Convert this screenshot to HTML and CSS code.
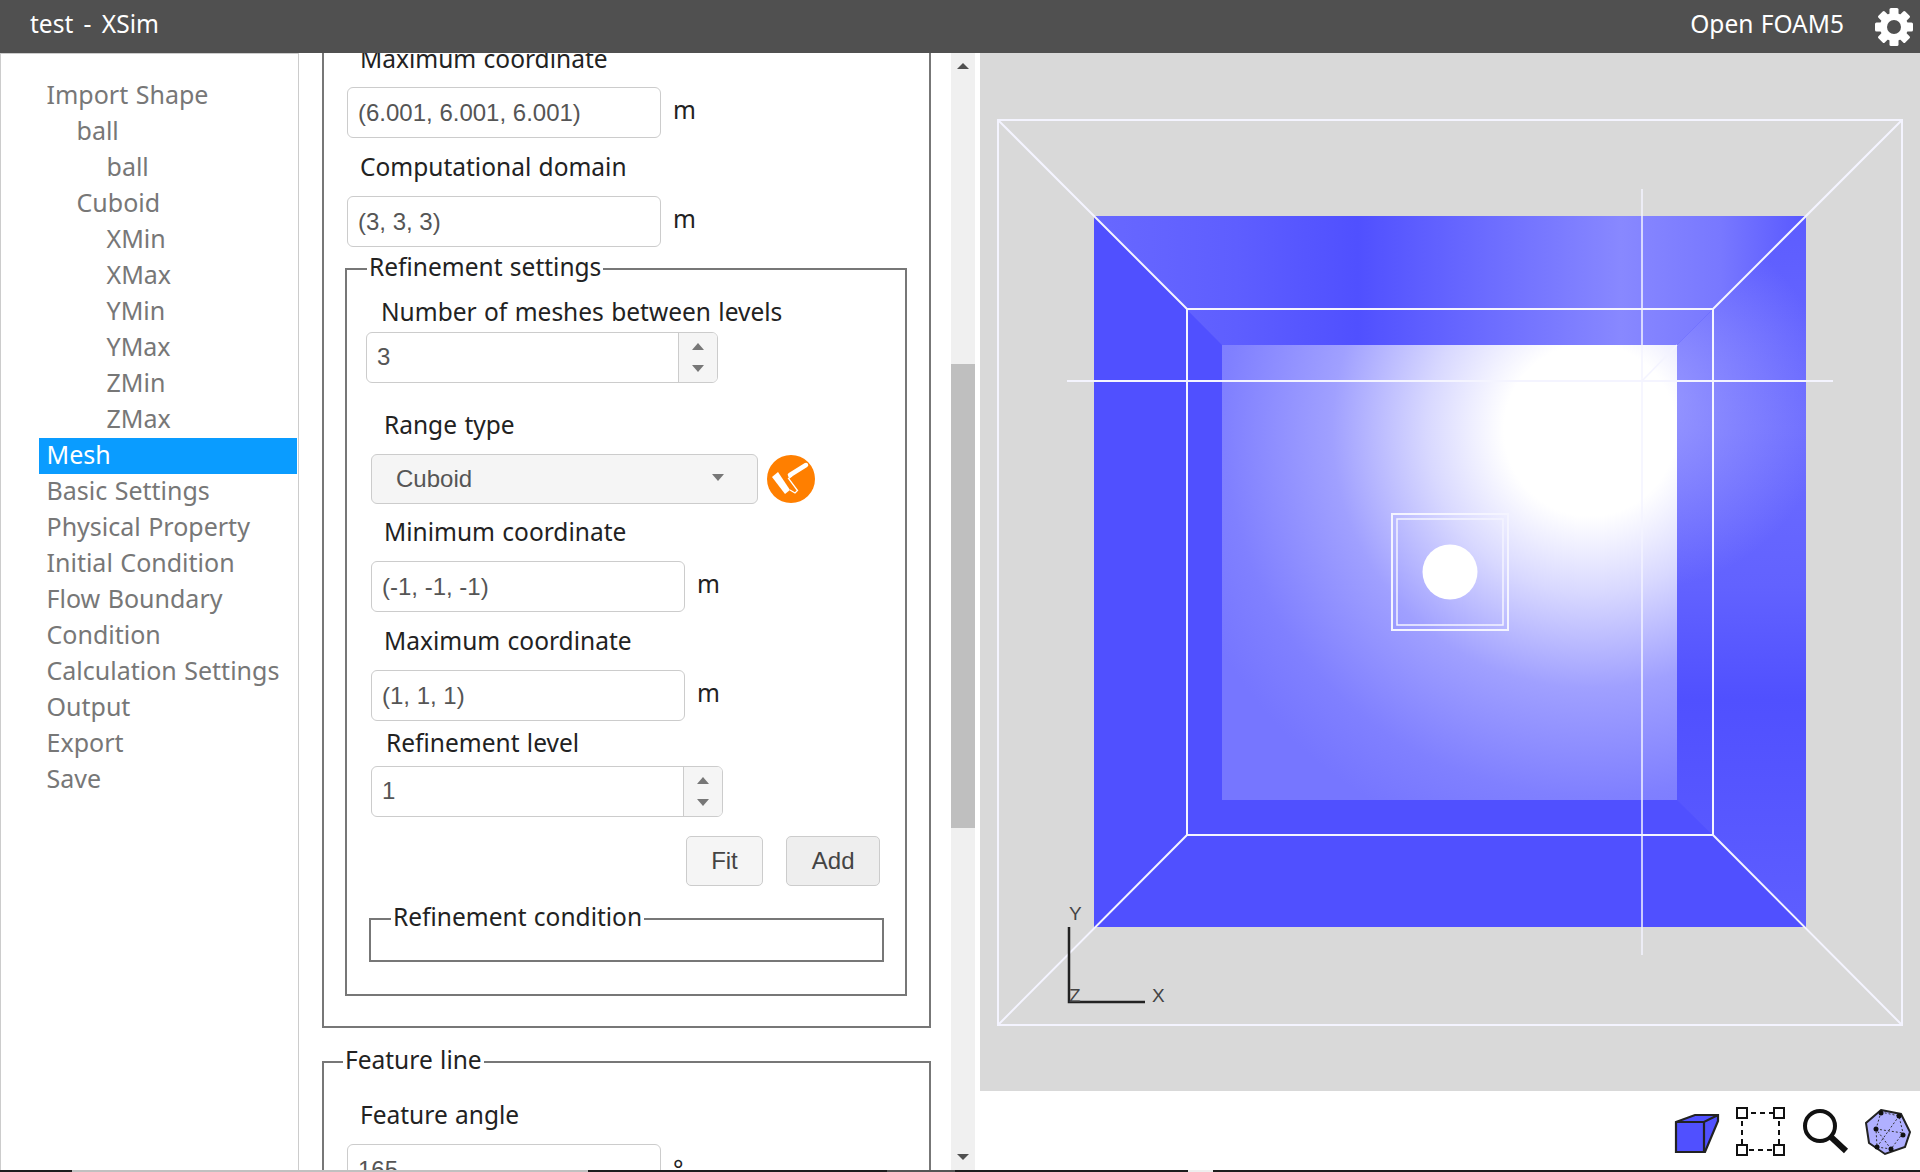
FILE: index.html
```html
<!DOCTYPE html>
<html lang="en">
<head>
  <meta charset="UTF-8">
  <title>test - XSim</title>
  <link rel="stylesheet" href="styles.css">
</head>
<body>

  <!-- Header -->
  <header class="top-bar">
    <div class="app-title">test - XSim</div>
    <div class="solver-name">Open FOAM5</div>
    <svg class="gear-icon" viewBox="0 0 40 40" width="40" height="40">
      <g fill="#fff">
        <rect x="15.5" y="1" width="9" height="38" rx="1.5"/>
        <rect x="15.5" y="1" width="9" height="38" rx="1.5" transform="rotate(45 20 20)"/>
        <rect x="15.5" y="1" width="9" height="38" rx="1.5" transform="rotate(90 20 20)"/>
        <rect x="15.5" y="1" width="9" height="38" rx="1.5" transform="rotate(135 20 20)"/>
      </g>
      <circle cx="20" cy="20" r="10.5" fill="none" stroke="#fff" stroke-width="7"/>
      <circle cx="20" cy="20" r="7" fill="#505050"/>
    </svg>
  </header>

  <div class="main-area">

    <!-- Tree menu -->
    <nav class="side-menu">
      <div class="menu-item">Import Shape</div>
      <div class="menu-item level-1">ball</div>
      <div class="menu-item level-2">ball</div>
      <div class="menu-item level-1">Cuboid</div>
      <div class="menu-item level-2">XMin</div>
      <div class="menu-item level-2">XMax</div>
      <div class="menu-item level-2">YMin</div>
      <div class="menu-item level-2">YMax</div>
      <div class="menu-item level-2">ZMin</div>
      <div class="menu-item level-2">ZMax</div>
      <div class="menu-item active">Mesh</div>
      <div class="menu-item">Basic Settings</div>
      <div class="menu-item">Physical Property</div>
      <div class="menu-item">Initial Condition</div>
      <div class="menu-item">Flow Boundary</div>
      <div class="menu-item">Condition</div>
      <div class="menu-item">Calculation Settings</div>
      <div class="menu-item">Output</div>
      <div class="menu-item">Export</div>
      <div class="menu-item">Save</div>
    </nav>

    <!-- Settings form, scrolled part way down -->
    <section class="form-panel">
      <div class="form-content">
        <div class="group">
          <div class="field-label">Maximum coordinate</div>
          <div class="input-row">
            <div class="text-input">(6.001, 6.001, 6.001)</div>
            <span class="unit">m</span>
          </div>
          <div class="field-label">Computational domain</div>
          <div class="input-row">
            <div class="text-input">(3, 3, 3)</div>
            <span class="unit">m</span>
          </div>

          <fieldset class="refine-box">
            <legend>Refinement settings</legend>
            <div class="field-label meshes-label">Number of meshes between levels</div>
            <div class="spin-input first-spin">
              <span class="spin-value">3</span>
              <span class="spin-buttons"><i class="arrow-up"></i><i class="arrow-down"></i></span>
            </div>

            <div class="range-block">
              <div class="field-label range-label">Range type</div>
              <div class="select-row">
                <div class="select-input">
                  <span>Cuboid</span>
                  <i class="arrow-down"></i>
                </div>
                <svg class="brush-icon" viewBox="0 0 48 48" width="48" height="48">
                  <circle cx="24" cy="24" r="24" fill="#ff7f00"/>
                  <path d="M5 22L11 17L23 35L18 39Z" fill="#fff"/>
                  <path d="M23 35L28 38L30.5 35.5L21.5 23.5L25 21" fill="none" stroke="#fff" stroke-width="1.3"/>
                  <path d="M23 20L39 10" fill="none" stroke="#fff" stroke-width="4.5" stroke-linecap="round"/>
                </svg>
              </div>
              <div class="field-label min-label">Minimum coordinate</div>
              <div class="input-row">
                <div class="text-input">(-1, -1, -1)</div>
                <span class="unit">m</span>
              </div>
              <div class="field-label">Maximum coordinate</div>
              <div class="input-row">
                <div class="text-input">(1, 1, 1)</div>
                <span class="unit">m</span>
              </div>
              <div class="field-label level-label">Refinement level</div>
              <div class="spin-input">
                <span class="spin-value">1</span>
                <span class="spin-buttons"><i class="arrow-up"></i><i class="arrow-down"></i></span>
              </div>
            </div>

            <div class="button-row">
              <div class="btn">Fit</div>
              <div class="btn btn-add">Add</div>
            </div>

            <fieldset class="condition-box">
              <legend>Refinement condition</legend>
            </fieldset>
          </fieldset>
        </div>

        <fieldset class="feature-box">
          <legend>Feature line</legend>
          <div class="field-label feature-label">Feature angle</div>
          <div class="input-row">
            <div class="text-input">165</div>
            <span class="unit degree">°</span>
          </div>
        </fieldset>
      </div>

      <div class="scrollbar">
        <i class="scroll-up"></i>
        <div class="scroll-track"><div class="scroll-thumb"></div></div>
        <i class="scroll-down"></i>
      </div>
    </section>

    <!-- 3D view and toolbar -->
    <section class="view-panel">
      <svg class="view-3d" viewBox="980 53 940 1038" width="940" height="1038">
        <defs>
          <linearGradient id="topFace" gradientUnits="userSpaceOnUse" x1="1094" y1="0" x2="1806" y2="0">
            <stop offset="0" stop-color="#6868ff"/>
            <stop offset="0.2" stop-color="#5e5eff"/>
            <stop offset="0.37" stop-color="#5050ff"/>
            <stop offset="0.58" stop-color="#7070ff"/>
            <stop offset="0.74" stop-color="#8888ff"/>
            <stop offset="0.88" stop-color="#7878ff"/>
            <stop offset="1" stop-color="#5858ff"/>
          </linearGradient>
          <linearGradient id="rightFace" gradientUnits="userSpaceOnUse" x1="0" y1="216" x2="0" y2="927">
            <stop offset="0" stop-color="#5c5cff"/>
            <stop offset="0.3" stop-color="#6c6cff"/>
            <stop offset="0.52" stop-color="#6262ff"/>
            <stop offset="0.68" stop-color="#5050ff"/>
            <stop offset="1" stop-color="#5e5eff"/>
          </linearGradient>
          <radialGradient id="rightGlow" gradientUnits="userSpaceOnUse" cx="1640" cy="400" r="190">
            <stop offset="0" stop-color="#a8a8ff" stop-opacity="0.8"/>
            <stop offset="1" stop-color="#a8a8ff" stop-opacity="0"/>
          </radialGradient>
          <radialGradient id="backGlow" gradientUnits="userSpaceOnUse" cx="1590" cy="430" r="430">
            <stop offset="0" stop-color="#fff"/>
            <stop offset="0.2" stop-color="#fff"/>
            <stop offset="0.38" stop-color="#d8d8ff"/>
            <stop offset="0.6" stop-color="#a0a0ff"/>
            <stop offset="0.85" stop-color="#8080ff"/>
            <stop offset="1" stop-color="#7676ff"/>
          </radialGradient>
        </defs>

        <rect x="1094" y="216" width="712" height="711" fill="#5050ff"/>
        <polygon points="1094,216 1806,216 1677,345 1222,345" fill="url(#topFace)"/>
        <polygon points="1806,216 1806,927 1677,800 1677,345" fill="url(#rightFace)"/>
        <polygon points="1806,216 1806,927 1677,800 1677,345" fill="url(#rightGlow)"/>
        <rect x="1222" y="345" width="455" height="455" fill="url(#backGlow)"/>

        <g fill="none" stroke="#f4f4ff" stroke-width="2">
          <rect x="998" y="120" width="904" height="905"/>
          <rect x="1187" y="309" width="526" height="526"/>
          <path d="M998 120L1187 309M1902 120L1713 309M998 1025L1187 835M1902 1025L1713 835"/>
          <path d="M1067 381H1833"/>
          <path d="M1642 189V955M1677 345L1642 381" stroke-width="1.5"/>
          <rect x="1392" y="514" width="116" height="116"/>
          <rect x="1397" y="519" width="106" height="106" stroke-width="1.5"/>
        </g>
        <circle cx="1450" cy="572" r="27.5" fill="#fff"/>

        <path d="M1069 927V1002H1145" fill="none" stroke="#222" stroke-width="2.5"/>
        <text class="axis-label" x="1069" y="920">Y</text>
        <text class="axis-label" x="1069" y="1002">Z</text>
        <text class="axis-label" x="1152" y="1002">X</text>
      </svg>

      <div class="view-tools">
        <svg class="tool-icon" viewBox="0 0 46 44" width="46" height="44">
          <path d="M2 12L21 5H44V11L31 42H2Z" fill="#5050ff"/>
          <path d="M2 12H30L44 5M30 12V42M2 12L21 5H44V11L31 42H2Z" fill="none" stroke="#222" stroke-width="2.2"/>
        </svg>
        <svg class="tool-icon" viewBox="0 0 50 50" width="50" height="50">
          <path d="M6 6H43V43H6Z" fill="none" stroke="#111" stroke-width="2" stroke-dasharray="5 4"/>
          <g fill="#fff" stroke="#111" stroke-width="2">
            <rect x="1" y="1" width="10" height="10"/>
            <rect x="38" y="1" width="10" height="10"/>
            <rect x="1" y="38" width="10" height="10"/>
            <rect x="38" y="38" width="10" height="10"/>
          </g>
        </svg>
        <svg class="tool-icon" viewBox="0 0 48 48" width="48" height="48">
          <circle cx="18" cy="18" r="15" fill="none" stroke="#111" stroke-width="4"/>
          <path d="M29 29L44 43" fill="none" stroke="#111" stroke-width="6"/>
        </svg>
        <svg class="tool-icon" viewBox="0 0 48 48" width="48" height="48">
          <path d="M17 2L37 6L46 24L41 39L21 46L5 35L2 15Z" fill="#b0b0ff" stroke="#222" stroke-width="2"/>
          <path d="M17 4L12 21L13 39L27 41L39 25L35 8L17 4M12 21L39 25M13 39L35 8M27 41L12 21" fill="none" stroke="#333" stroke-width="1" stroke-dasharray="2 2"/>
          <g fill="#111">
            <circle cx="17" cy="5" r="2.5"/>
            <circle cx="35" cy="8" r="2.5"/>
            <circle cx="12" cy="21" r="2.5"/>
            <circle cx="39" cy="27" r="2.5"/>
            <circle cx="13" cy="39" r="2.5"/>
            <circle cx="27" cy="41" r="2.5"/>
          </g>
        </svg>
      </div>
    </section>
  </div>

  <!-- Edge of the window below -->
  <div class="window-edge">
    <span class="edge-dark edge-a"></span>
    <span class="edge-gray edge-b"></span>
    <span class="edge-dark edge-c"></span>
    <span class="edge-mid edge-d"></span>
    <span class="edge-dark edge-e"></span>
    <span class="edge-light edge-f"></span>
    <span class="edge-dark edge-g"></span>
  </div>

</body>
</html>
```

FILE: styles.css
```css
/* Global styles */
* {
  box-sizing: border-box;
}

body {
  font-family: 'Noto Sans', sans-serif;
  font-size: 24.5px;
  word-spacing: 1px;
  margin: 0;
  height: 100vh;
  overflow: hidden;
  display: flex;
  flex-direction: column;
  background-color: white;
  color: #222;
}

/* Header */
.top-bar {
  height: 53px;
  flex: none;
  display: flex;
  align-items: center;
  padding: 0 6px 0 30px;
  background-color: #505050;
  color: white;
  position: relative;
  z-index: 2;
}

.app-title {
  flex: 1;
  margin-bottom: 6px;
  word-spacing: 4px;
}

.solver-name {
  margin: 0 30px 6px 0;
}

.main-area {
  flex: 1;
  min-height: 0;
  display: flex;
}

/* Tree menu */
.side-menu {
  width: 299px;
  flex: none;
  padding: 24px 1px 0 38px;
  border-left: 1px solid #ccc;
  border-right: 1px solid #ccc;
  border-top: 1px solid #ccc;
  font-size: 25px;
  color: #777;
}

.menu-item {
  height: 36px;
  line-height: 32px;
  padding-left: 7.5px;
  white-space: nowrap;
}

.level-1 {
  padding-left: 37.5px;
}

.level-2 {
  padding-left: 67.5px;
}

.menu-item.active {
  background-color: #0a9cff;
  color: white;
}

/* Settings form */
.form-panel {
  width: 676px;
  flex: none;
  display: flex;
  overflow: hidden;
}

.form-content {
  width: 652px;
  padding-left: 23px;
  margin-top: -30px;
}

.group {
  width: 609px;
  height: 1005px;
  padding: 15px 0 0 23px;
  border: 2px solid #777;
}

.field-label {
  height: 36px;
  line-height: 36px;
  margin-left: 13px;
  white-space: nowrap;
}

.group > .field-label:first-child {
  line-height: 38px;
}

.input-row {
  display: flex;
  margin: 11px 0;
}

.text-input {
  width: 314px;
  height: 51px;
  line-height: 49px;
  padding: 0 10px;
  border: 1.5px solid #ccc;
  border-radius: 6px;
  font-family: 'Liberation Sans', sans-serif;
  font-size: 24px;
  word-spacing: 0;
  color: #555;
}

.unit {
  margin-left: 12px;
  line-height: 46px;
}

fieldset {
  margin: 0;
  padding: 0;
  border: 2px solid #777;
}

legend {
  height: 36px;
  line-height: 32px;
  padding: 0 2px;
  white-space: nowrap;
}

.refine-box {
  width: 562px;
  height: 745px;
  margin: -7px 0 0 -2px;
}

.refine-box > legend {
  margin-left: 20px;
}

.meshes-label {
  margin: 7px 0 2px 34px;
}

.spin-input {
  width: 352px;
  height: 51px;
  display: flex;
  border: 1.5px solid #ccc;
  border-radius: 6px;
  font-family: 'Liberation Sans', sans-serif;
  font-size: 24px;
  color: #555;
  overflow: hidden;
}

.first-spin {
  margin-left: 19px;
}

.spin-value {
  flex: 1;
  line-height: 48px;
  padding-left: 10px;
}

.spin-buttons {
  width: 39px;
  display: flex;
  flex-direction: column;
  align-items: center;
  justify-content: space-around;
  padding: 3px 0;
  background-color: #f5f5f5;
  border-left: 1.5px solid #ccc;
}

.arrow-up,
.arrow-down {
  width: 0;
  height: 0;
  border-left: 6px solid transparent;
  border-right: 6px solid transparent;
}

.arrow-up {
  border-bottom: 7px solid #777;
}

.arrow-down {
  border-top: 7px solid #777;
}

.range-block {
  margin-left: 24px;
}

.range-label {
  margin-top: 24px;
}

.select-row {
  display: flex;
  align-items: center;
  margin-top: 11px;
}

.select-input {
  width: 387px;
  height: 50px;
  display: flex;
  align-items: center;
  justify-content: space-between;
  padding: 0 33px 0 24px;
  background-color: #f5f5f5;
  border: 1.5px solid #ccc;
  border-radius: 6px;
  font-family: 'Liberation Sans', sans-serif;
  font-size: 24px;
  color: #555;
}

.select-input .arrow-down {
  margin-bottom: 4px;
}

.brush-icon {
  margin-left: 9px;
}

.min-label {
  margin-top: 10px;
}

.level-label {
  margin: -7px 0 5px 15px;
}

.button-row {
  display: flex;
  justify-content: flex-end;
  gap: 23px;
  margin: 19px 25px 0 0;
}

.btn {
  height: 50px;
  line-height: 47px;
  padding: 0 24.5px;
  background-color: #f5f5f5;
  border: 1.5px solid #ccc;
  border-radius: 5px;
  font-family: 'Liberation Sans', sans-serif;
  font-size: 24px;
  color: #444;
}

.btn-add {
  background-color: #eee;
}

.condition-box {
  width: 515px;
  height: 61px;
  margin: 15px 0 0 22px;
}

.condition-box > legend {
  margin-left: 20px;
}

.feature-box {
  width: 609px;
  height: 200px;
  margin-top: 16px;
}

.feature-box > legend {
  margin-left: 19px;
}

.feature-label {
  margin: 17px 0 11px 36px;
}

.feature-box .input-row {
  margin: 0 0 0 23px;
}

.degree {
  line-height: 51px;
}

/* Scrollbar */
.scrollbar {
  width: 24px;
  flex: none;
  display: flex;
  flex-direction: column;
  align-items: center;
  background-color: #f0f0f0;
}

.scroll-up,
.scroll-down {
  flex: none;
  width: 0;
  height: 0;
  margin: 10px 0;
  border-left: 6px solid transparent;
  border-right: 6px solid transparent;
}

.scroll-up {
  border-bottom: 6px solid #505050;
}

.scroll-down {
  border-top: 6px solid #505050;
}

.scroll-track {
  flex: 1;
  width: 100%;
}

.scroll-thumb {
  height: 464px;
  margin-top: 285px;
  background-color: #bfbfbf;
}

/* 3D view */
.view-panel {
  margin-left: 5px;
  flex: 1;
  display: flex;
  flex-direction: column;
}

.view-3d {
  display: block;
  flex: none;
  background-color: #d9d9d9;
}

.axis-label {
  font-family: 'Liberation Sans', sans-serif;
  font-size: 19px;
  fill: #444;
}

.view-tools {
  flex: 1;
  display: flex;
  align-items: center;
  justify-content: flex-end;
  gap: 16px;
  padding: 2px 8px 0 0;
}

.tool-icon:last-child {
  margin-left: -2px;
}

/* Strip of what lies below the window */
.window-edge {
  height: 2px;
  flex: none;
  display: flex;
}

.edge-dark {
  background-color: #1e1e1e;
}

.edge-gray {
  background-color: #c0c0c0;
}

.edge-mid {
  background-color: #555;
}

.edge-light {
  background-color: #eee;
}

.edge-a { width: 72px; }
.edge-b { width: 516px; }
.edge-c { width: 299px; }
.edge-d { width: 68px; }
.edge-e { width: 233px; }
.edge-f { width: 25px; }
.edge-g { flex: 1; }
```
